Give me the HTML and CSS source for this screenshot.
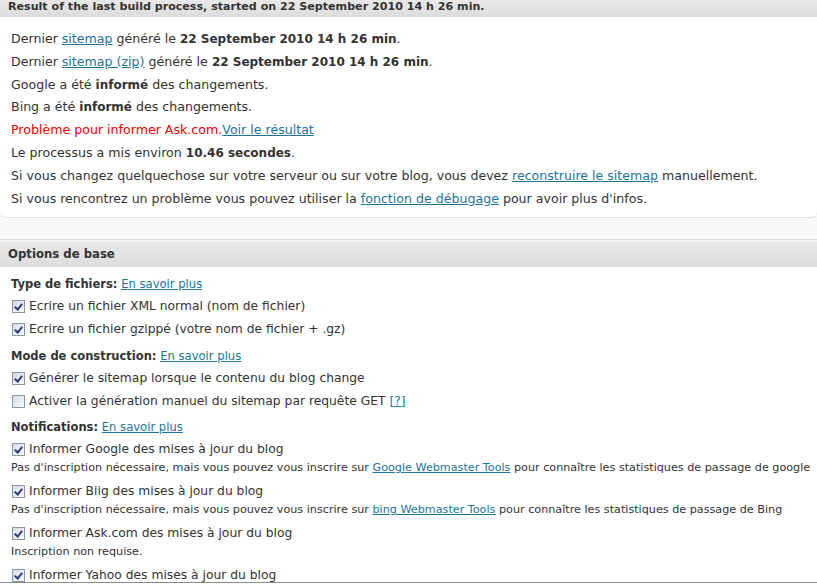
FILE: index.html
```html
<!DOCTYPE html>
<html lang="fr">
<head>
<meta charset="utf-8">
<title>Sitemap</title>
<link rel="stylesheet" href="styles.css">
</head>
<body>
<div class="postbox first">
  <h3 class="hndle">Result of the last build process, started on 22 September 2010 14 h 26 min.</h3>
  <div class="inside status">
    <p>Dernier <a href="#">sitemap</a> généré le <b>22 September 2010 14 h 26 min</b>.</p>
    <p>Dernier <a href="#">sitemap (zip)</a> généré le <b>22 September 2010 14 h 26 min</b>.</p>
    <p>Google a été <b>informé</b> des changements.</p>
    <p>Bing a été <b>informé</b> des changements.</p>
    <p><span class="err">Problème pour informer Ask.com.</span><a href="#">Voir le résultat</a></p>
    <p>Le processus a mis environ <b>10.46 secondes</b>.</p>
    <p>Si vous changez quelquechose sur votre serveur ou sur votre blog, vous devez <a href="#">reconstruire le sitemap</a> manuellement.</p>
    <p>Si vous rencontrez un problème vous pouvez utiliser la <a href="#">fonction de débugage</a> pour avoir plus d'infos.</p>
  </div>
</div>
<div class="postbox second">
  <h3 class="hndle">Options de base</h3>
  <div class="inside options">
    <div class="group top"><b>Type de fichiers:</b> <a href="#">En savoir plus</a></div>
    <div class="opt"><span class="cb on"></span><span>Ecrire un fichier XML normal (nom de fichier)</span></div>
    <div class="opt"><span class="cb on"></span><span>Ecrire un fichier gzippé (votre nom de fichier + .gz)</span></div>
    <div class="group"><b>Mode de construction:</b> <a href="#">En savoir plus</a></div>
    <div class="opt"><span class="cb on"></span><span>Générer le sitemap lorsque le contenu du blog change</span></div>
    <div class="opt"><span class="cb"></span><span>Activer la génération manuel du sitemap par requête GET <a href="#">[?]</a></span></div>
    <div class="group"><b>Notifications:</b> <a href="#">En savoir plus</a></div>
    <div class="opt"><span class="cb on"></span><span>Informer Google des mises à jour du blog</span></div>
    <div class="desc">Pas d'inscription nécessaire, mais vous pouvez vous inscrire sur <a href="#">Google Webmaster Tools</a> pour connaître les statistiques de passage de google</div>
    <div class="opt"><span class="cb on"></span><span>Informer Biig des mises à jour du blog</span></div>
    <div class="desc">Pas d'inscription nécessaire, mais vous pouvez vous inscrire sur <a href="#">bing Webmaster Tools</a> pour connaître les statistiques de passage de Bing</div>
    <div class="opt"><span class="cb on"></span><span>Informer Ask.com des mises à jour du blog</span></div>
    <div class="desc">Inscription non requise.</div>
    <div class="opt"><span class="cb on"></span><span>Informer Yahoo des mises à jour du blog</span></div>
  </div>
</div>
<div class="frame-line"></div>
</body>
</html>
```
FILE: styles.css
```css
html, body {
  margin: 0;
  padding: 0;
  background: #f9f9f9;
  font-family: "DejaVu Sans", Verdana, sans-serif;
  color: #333;
  overflow: hidden;
  height: 584px;
}
a { color: #21759b; text-decoration: underline; }
b { font-weight: bold; color: #333; }

.postbox {
  background: #fff;
  border-top: 1px solid #dfdfdf;
  border-bottom: 1px solid #dfdfdf;
}
.postbox.first { border-top: none; border-radius: 0 0 6px 6px; }
.postbox.second { margin-top: 21px; }

.hndle {
  margin: 0;
  font-weight: bold;
  color: #333;
  padding: 0 8px;
  background: linear-gradient(#e9e9e9, #dcdcdc);
  white-space: nowrap;
}
.first .hndle { height: 17px; line-height: 13px; font-size: 11.1px; }
.second .hndle { height: 26px; line-height: 27px; font-size: 11.7px; border-top: 1px solid #f4f4f4; }

.inside.status { padding: 11px 11px 7px; font-size: 12.6px; }
.status p { margin: 0; line-height: 22.8px; }
.status b { font-size: 12px; }
.err { color: #e00; }

.options { padding: 6px 11px 0; font-size: 12.3px; }
.group { font-size: 11.6px; line-height: 22px; margin-top: 3.5px; white-space: nowrap; }
.group.top { margin-top: 0; }
.group b { font-size: 11.5px; }
.opt { display: flex; align-items: center; line-height: 23px; white-space: nowrap; }
.desc { font-size: 11.2px; line-height: 13px; margin-bottom: 6px; white-space: nowrap; }

.cb {
  width: 11px;
  height: 11px;
  border: 1px solid #8f96a3;
  background: linear-gradient(135deg, #d6dae2, #fafbfd);
  margin: 0 4px 0 1px;
  flex: none;
  position: relative;
}
.cb.on::after {
  content: "";
  position: absolute;
  left: 3px;
  top: 1px;
  width: 3px;
  height: 6px;
  border: solid #2c3d7a;
  border-width: 0 2px 2px 0;
  transform: rotate(40deg);
}

.frame-line {
  position: fixed;
  left: 0;
  right: 0;
  bottom: 1px;
  height: 1px;
  background: #8c8c8c;
}
```
